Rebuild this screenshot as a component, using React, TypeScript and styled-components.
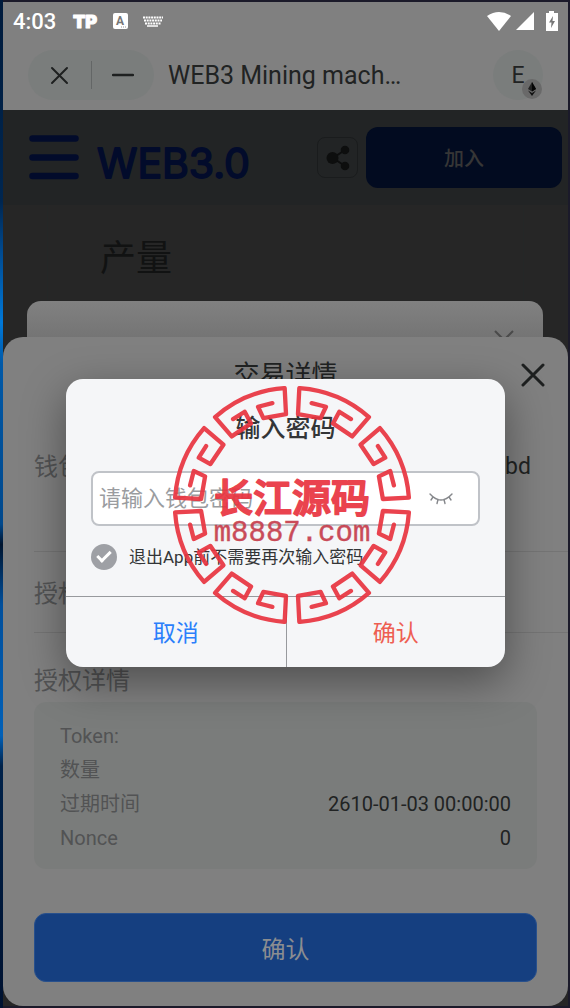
import React from "react";
import styled, { createGlobalStyle } from "styled-components";

const GlobalStyle = createGlobalStyle`
  *, *::before, *::after { box-sizing: border-box; }
  body {
    margin: 0;
    background: #1b1a2a;
    font-family: Roboto, "Noto Sans CJK SC", sans-serif;
    color: #212323;
  }
  button, input { font: inherit; color: inherit; }
  button { padding: 0; border: 0; background: none; cursor: pointer; }
  h1, h2, p, dl, dt, dd { margin: 0; font-weight: 400; }
`;

const Desktop = styled.div`
  display: grid;
  min-height: 100vh;
  padding: 2px 2px 2px 3px;
  background: linear-gradient(#001b3c 0, #002650 20%, #004a90 25%, #0078d8 32%, #0059a8 36%,
    #00488c 52%, #00152f 54%, #004f9c 60%, #0060b8 73%, #00224a 76%, #001230 100%) left / 3px 100% no-repeat, #1b1a2a;
`;

const Phone = styled.main`
  display: grid;
  overflow: hidden;
  background: #262626;
  > * { grid-area: 1 / 1; min-width: 0; }
`;

const Page = styled.div`
  display: flex;
  flex-direction: column;
`;

const StatusBar = styled.header`
  display: flex;
  align-items: center;
  justify-content: space-between;
  height: 38px;
  padding: 0 10px;
  background: #808080;
  color: #fff;
  font-size: 22px;
  font-weight: 500;
`;

const StatusGroup = styled.div<{ $gap: number }>`
  display: flex;
  align-items: center;
  gap: ${(p) => p.$gap}px;
`;

const TitleBar = styled.div`
  display: flex;
  align-items: center;
  height: 70px;
  padding: 0 25px;
  background: #808080;
`;

const WindowControls = styled.div`
  display: flex;
  align-items: center;
  width: 126px;
  height: 50px;
  border-radius: 25px;
  background: #7a7d7c;
`;

const ControlButton = styled.button`
  display: grid;
  flex: 1;
  place-items: center;
  height: 28px;
  & + & { border-left: 1px solid #636666; }
`;

const PageTitle = styled.h1`
  flex: 1;
  margin-left: 14px;
  padding-top: 2px;
  font-size: 25px;
  line-height: 34px;
`;

const Account = styled.button`
  position: relative;
  width: 50px;
  height: 50px;
  border-radius: 50%;
  background: #7a7d7c;
  font-size: 23px;
`;

const ChainBadge = styled.span`
  position: absolute;
  right: 1px;
  bottom: 1px;
  display: grid;
  place-items: center;
  width: 20px;
  height: 20px;
  border-radius: 50%;
  background: #696969;
`;

const SiteHeader = styled.div`
  display: flex;
  align-items: center;
  height: 95px;
  padding: 0 6px 0 26px;
  background: #222425;
`;

const MenuButton = styled.button`
  height: 45px;
`;

const Logo = styled.svg`
  flex: none;
  margin-left: 16px;
`;

const ShareButton = styled.button`
  display: grid;
  place-items: center;
  width: 41px;
  height: 41px;
  margin-left: auto;
  border: 1px solid #1a1c1d;
  border-radius: 8px;
`;

const JoinButton = styled.button`
  width: 196px;
  height: 61px;
  margin-left: 8px;
  border-radius: 12px;
  background: #020b20;
  color: #363636;
  font-size: 20px;
  font-weight: 500;
`;

const SiteBody = styled.section`
  flex: 1;
  margin: 0 44px;
  padding: 30px 52px;
  border: solid #242727;
  border-width: 0 1px;
  color: #111212;
`;

const SectionTitle = styled.h2`
  font-size: 36px;
  line-height: 48px;
`;

const BackCard = styled.div`
  display: flex;
  align-self: end;
  justify-content: flex-end;
  height: 705px;
  margin: 0 25px 0 24px;
  padding: 25px 28px;
  border-radius: 14px 14px 0 0;
  background: linear-gradient(#818181 0, #737373 40px);
`;

const Sheet = styled.section`
  align-self: end;
  z-index: 1;
  padding: 0 0 24px 31px;
  border-radius: 20px;
  background: #808080;
`;

const SheetHeader = styled.div`
  display: grid;
  grid-template-columns: 1fr auto 1fr;
  align-items: center;
  height: 75px;
  padding-right: 23px;
  > button { justify-self: end; height: 24px; }
`;

const SheetTitle = styled.h2`
  grid-column: 2;
  margin-right: 8px;
  font-size: 26px;
  line-height: 34px;
`;

const SheetRow = styled.div<{ $height: number; $top: number }>`
  display: flex;
  justify-content: space-between;
  height: ${(p) => p.$height}px;
  padding: ${(p) => p.$top}px 37px 0 0;
  border-bottom: 1px solid #747474;
  font-size: 23px;
  line-height: 34px;
`;

const Muted = styled.span`
  color: #525354;
  font-size: 24px;
`;

const GroupTitle = styled.h2`
  padding: 31px 0 4px;
  color: #525354;
  font-size: 24px;
  line-height: 34px;
`;

const DetailBox = styled.dl`
  margin-right: 31px;
  padding: 17px 26px 14px;
  border-radius: 12px;
  background: #7a7c7b;
`;

const DetailRow = styled.div`
  display: flex;
  justify-content: space-between;
  font-size: 20px;
  line-height: 34px;
  dt { color: #525354; }
`;

const PrimaryButton = styled.button`
  display: block;
  width: calc(100% - 31px);
  height: 69px;
  margin-top: 44px;
  border: 1px solid #28508c;
  border-radius: 12px;
  background: #153f80;
  color: #8b8d90;
  font-size: 24px;
`;

const DialogLayer = styled.div`
  z-index: 2;
  display: grid;
  place-items: center;
  padding: 38px 63px 0;
`;

const Dialog = styled.form`
  position: relative;
  width: 100%;
  max-width: 440px;
  border-radius: 17px;
  background: #f5f6f8;
  box-shadow: 0 14px 44px rgba(0, 0, 0, 0.4);
  color: #333537;
`;

const DialogBody = styled.div`
  padding: 33px 25px 25px;
`;

const DialogTitle = styled.h2`
  font-size: 25px;
  font-weight: 500;
  line-height: 34px;
  text-align: center;
`;

const PasswordField = styled.label`
  display: flex;
  align-items: center;
  height: 55px;
  margin-top: 25px;
  padding: 0 25px 0 6px;
  border: 2px solid #c0c3c8;
  border-radius: 8px;
  background: #fff;
`;

const PasswordInput = styled.input`
  flex: 1;
  min-width: 0;
  padding: 0;
  border: 0;
  outline: 0;
  background: none;
  font-size: 22px;
  &::placeholder { color: #9a9ca0; opacity: 1; }
`;

const RememberLabel = styled.label`
  display: flex;
  align-items: center;
  gap: 12px;
  margin-top: 18px;
  padding-bottom: 1px;
  font-size: 17px;
  line-height: 25px;
`;

const RoundCheck = styled.input`
  appearance: none;
  width: 26px;
  height: 26px;
  margin: 0;
  border-radius: 50%;
  background: #9ea0a5;
  display: grid;
  place-items: center;
  &::after {
    content: "";
    width: 14px;
    height: 8px;
    margin-bottom: 4px;
    border: solid #fff;
    border-width: 0 0 3px 3px;
    transform: rotate(-45deg);
  }
`;

const DialogActions = styled.div`
  display: grid;
  grid-template-columns: 1fr 1fr;
  border-top: 1px solid #97999d;
`;

const DialogButton = styled.button<{ $color: string }>`
  height: 70px;
  padding-bottom: 2px;
  color: ${(p) => p.$color};
  font-size: 23px;
  & + & { border-left: 1px solid #97999d; }
`;

const Seal = styled.svg`
  position: absolute;
  top: 7px;
  left: calc(50% - 113px);
  pointer-events: none;
`;

const Cross = ({ size, weight }: { size: number; weight: number }) => (
  <svg width={size} height={size} viewBox={`0 0 ${size} ${size}`} fill="none" stroke="#1e2020" strokeWidth={weight} strokeLinecap="round">
    <path d={`M2 2L${size - 2} ${size - 2}M${size - 2} 2L2 ${size - 2}`} />
  </svg>
);

const fretPath =
  "M-59 -306L-102 -295L-86 -261L-18 -273L-22 -351A352 352 0 0 0 -231 -264L-181 -206L-123 -245L-142 -280L-177 -258";

const details = [
  { name: "Token:", value: "" },
  { name: "数量", value: "" },
  { name: "过期时间", value: "2610-01-03 00:00:00" },
  { name: "Nonce", value: "0" },
];

function StatusIcons() {
  return (
    <>
      <StatusGroup $gap={15}>
        <span>4:03</span>
        <svg width="27" height="24" viewBox="0 0 27 24" role="img" aria-label="TP">
          <text x="2" y="19" fontFamily="Inter, sans-serif" fontSize="18" fontWeight="900" fill="#fff" stroke="#fff" strokeWidth="1" strokeLinejoin="round">
            TP
          </text>
        </svg>
        <svg width="15" height="16" viewBox="0 0 15 16">
          <rect width="15" height="16" rx="2" fill="#fff" />
          <text x="7" y="12" fontSize="12" fontWeight="700" textAnchor="middle" fill="#777">A</text>
          <path d="M8 14h5" stroke="#999" strokeDasharray="1 1" />
        </svg>
        <svg width="20" height="11" viewBox="0 0 20 11" stroke="#fff" fill="none">
          <path d="M0 1.5h20M1 4.5h18M2 7.5h16" strokeWidth="2" strokeDasharray="2 .7" />
          <path d="M4 10h11" strokeWidth="1.5" />
        </svg>
      </StatusGroup>
      <StatusGroup $gap={5}>
        <svg width="24" height="20" viewBox="0 0 24 20" fill="#fff">
          <path d="M0 5Q12-3 24 5L12 20Z" />
        </svg>
        <svg width="18" height="18" viewBox="0 0 18 18" fill="#fff">
          <path d="M18 0V18H0Z" />
        </svg>
        <svg width="19" height="20" viewBox="0 0 19 20">
          <path d="M7 2h3V0h5v2h4v18H7Z" fill="#fff" />
          <path d="M14 5L10 11.500h2.500L12 17l4-7h-2.500Z" fill="#777" />
        </svg>
      </StatusGroup>
    </>
  );
}

export default function App() {
  return (
    <Desktop>
      <GlobalStyle />
      <Phone>
        <Page>
          <StatusBar>
            <StatusIcons />
          </StatusBar>
          <TitleBar>
            <WindowControls>
              <ControlButton type="button" aria-label="关闭">
                <Cross size={19} weight={2} />
              </ControlButton>
              <ControlButton type="button" aria-label="最小化">
                <svg width="22" height="4" viewBox="0 0 22 4" stroke="#1e2020" strokeWidth="2.400" strokeLinecap="round">
                  <path d="M1 2h20" />
                </svg>
              </ControlButton>
            </WindowControls>
            <PageTitle>WEB3 Mining mach…</PageTitle>
            <Account type="button">
              E
              <ChainBadge>
                <svg width="10" height="14" viewBox="0 0 10 14">
                  <path d="M5 0L1 7l4 2.500L9 7Z" fill="#222" />
                  <path d="M5 0v9.500L9 7Z" fill="#050505" />
                  <path d="M1 8.500L5 14l4-5.500L5 11Z" fill="#111" />
                </svg>
              </ChainBadge>
            </Account>
          </TitleBar>
          <SiteHeader>
            <MenuButton type="button" aria-label="菜单">
              <svg width="50" height="45" viewBox="0 0 50 45" stroke="#020b2b" strokeWidth="6.500" strokeLinecap="round">
                <path d="M3.500 3.500h43M3.500 22.500h43M3.500 41h43" />
              </svg>
            </MenuButton>
            <Logo width="170" height="64" viewBox="0 0 170 64" role="img" aria-label="WEB3.0">
              <text x="2" y="52" fontFamily="Inter, sans-serif" fontSize="41" fontWeight="400" fill="#020b2b" stroke="#020b2b" strokeWidth="1.800" strokeLinejoin="round">
                WEB3.0
              </text>
            </Logo>
            <ShareButton type="button" aria-label="分享">
              <svg width="24" height="26" viewBox="0 0 24 26" fill="#0d0e0e">
                <path d="M19 5L7 13l12 8" fill="none" stroke="#0d0e0e" strokeWidth="2" />
                <circle cx="6.500" cy="13" r="6" />
                <circle cx="19" cy="5" r="4.300" />
                <circle cx="19" cy="21" r="4.300" />
              </svg>
            </ShareButton>
            <JoinButton type="button">加入</JoinButton>
          </SiteHeader>
          <SiteBody>
            <SectionTitle>产量</SectionTitle>
          </SiteBody>
        </Page>

        <BackCard>
          <svg width="22" height="22" viewBox="0 0 22 22" fill="none" stroke="#4a4a4a" strokeWidth="2">
            <path d="M2 5l9 9 9-9" />
          </svg>
        </BackCard>

        <Sheet>
          <SheetHeader>
            <SheetTitle>交易详情</SheetTitle>
            <button type="button" aria-label="关闭">
              <Cross size={24} weight={3} />
            </button>
          </SheetHeader>
          <SheetRow $height={140} $top={38}>
            <Muted>钱包</Muted>
            <span>bd</span>
          </SheetRow>
          <SheetRow $height={81} $top={25}>
            <Muted>授权</Muted>
          </SheetRow>
          <GroupTitle>授权详情</GroupTitle>
          <DetailBox>
            {details.map((d) => (
              <DetailRow key={d.name}>
                <dt>{d.name}</dt>
                <dd>{d.value}</dd>
              </DetailRow>
            ))}
          </DetailBox>
          <PrimaryButton type="button">确认</PrimaryButton>
        </Sheet>

        <DialogLayer>
          <Dialog role="dialog" aria-labelledby="dialog-title" onSubmit={(e) => e.preventDefault()}>
            <DialogBody>
              <DialogTitle id="dialog-title">输入密码</DialogTitle>
              <PasswordField>
                <PasswordInput type="password" placeholder="请输入钱包密码" aria-label="钱包密码" />
                <svg width="24" height="12" viewBox="0 0 24 12" fill="none" stroke="#85878b" strokeWidth="1.400" strokeLinecap="round">
                  <path d="M1 1Q12 13 23 1M4 4L2 7M9 6.500L8 10.500M15 6.500L16 10.500M20 4L22 7" />
                </svg>
              </PasswordField>
              <RememberLabel>
                <RoundCheck type="checkbox" defaultChecked />
                退出App前不需要再次输入密码
              </RememberLabel>
            </DialogBody>
            <DialogActions>
              <DialogButton type="button" $color="#2a7ffb">取消</DialogButton>
              <DialogButton type="submit" $color="#ee5e52">确认</DialogButton>
            </DialogActions>
            <Seal width="238" height="238" viewBox="-119 -119 238 238" opacity="0.92">
              <g transform="scale(.333)" fill="none" stroke="#e93440" strokeWidth="13" strokeLinejoin="round" strokeLinecap="round">
                {[0, 90, 180, 270].map((angle) => (
                  <g key={angle} transform={`rotate(${angle})`}>
                    <path d={fretPath} />
                    <path d={fretPath} transform="scale(-1 1)" />
                  </g>
                ))}
              </g>
              <text y="7" textAnchor="middle" fontSize="39" fontWeight="500" fill="#e93440" stroke="#e93440" strokeWidth="1.800" strokeLinejoin="round">
                长江源码
              </text>
              <text y="36" textAnchor="middle" fontFamily="Liberation Mono, monospace" fontSize="29" fill="#c63d4c" stroke="#c63d4c" strokeWidth=".4">
                m8887.com
              </text>
            </Seal>
          </Dialog>
        </DialogLayer>
      </Phone>
    </Desktop>
  );
}
